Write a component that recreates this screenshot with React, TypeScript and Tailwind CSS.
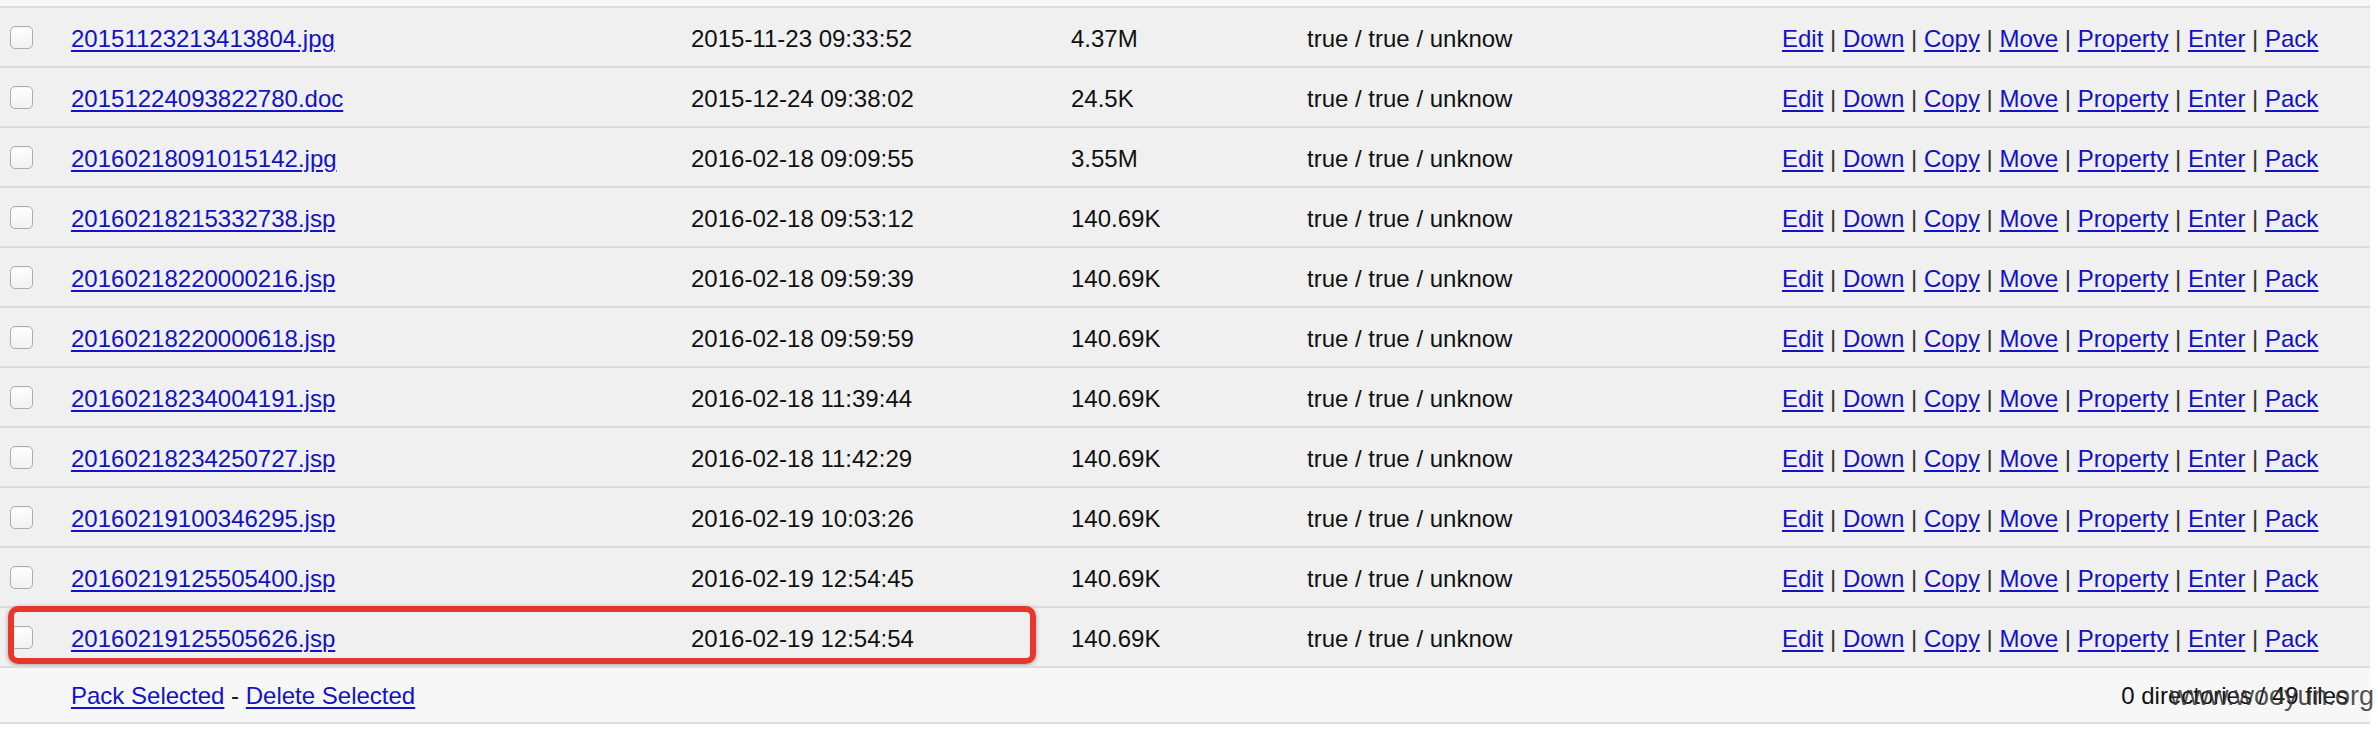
const files = [
  { name: "20151123213413804.jpg", time: "2015-11-23 09:33:52", size: "4.37M" },
  { name: "20151224093822780.doc", time: "2015-12-24 09:38:02", size: "24.5K" },
  { name: "20160218091015142.jpg", time: "2016-02-18 09:09:55", size: "3.55M" },
  { name: "20160218215332738.jsp", time: "2016-02-18 09:53:12", size: "140.69K" },
  { name: "20160218220000216.jsp", time: "2016-02-18 09:59:39", size: "140.69K" },
  { name: "20160218220000618.jsp", time: "2016-02-18 09:59:59", size: "140.69K" },
  { name: "20160218234004191.jsp", time: "2016-02-18 11:39:44", size: "140.69K" },
  { name: "20160218234250727.jsp", time: "2016-02-18 11:42:29", size: "140.69K" },
  { name: "20160219100346295.jsp", time: "2016-02-19 10:03:26", size: "140.69K" },
  { name: "20160219125505400.jsp", time: "2016-02-19 12:54:45", size: "140.69K" },
  { name: "20160219125505626.jsp", time: "2016-02-19 12:54:54", size: "140.69K" },
];

const actions = ["Edit", "Down", "Copy", "Move", "Property", "Enter", "Pack"];

const link = "text-[#1212c6] underline decoration-2 underline-offset-[3px]";

function Checkbox() {
  return (
    <span className="block h-[23px] w-[23px] rounded-[5px] border border-[#adadad] bg-gradient-to-b from-white to-[#f1f1f1] shadow-[inset_0_1px_1px_rgba(0,0,0,0.06)]" />
  );
}

export default function App() {
  return (
    <div className="w-[2378px] h-[730px] bg-white text-[24px] leading-none text-[#111] font-['Liberation_Sans',Arial,sans-serif]">
      <div className="w-[2370px]">
        <div className="h-[6px] bg-[#f6f6f6]" />

        {files.map((f, i) => (
          <div
            key={f.name}
            className="relative grid h-[60px] grid-cols-[71px_620px_380px_236px_475px_1fr] items-center border-t-2 border-[#dcdcdc] bg-[#f0f0f0] pt-[3px]"
          >
            <div className="pl-[10px] -mt-[2px]">
              <Checkbox />
            </div>
            <div>
              <a className={link}>{f.name}</a>
            </div>
            <div>{f.time}</div>
            <div>{f.size}</div>
            <div>true / true / unknow</div>
            <div className="whitespace-nowrap">
              {actions.map((a, j) => (
                <span key={a}>
                  {j > 0 && <span className="text-[#333]"> | </span>}
                  <a className={link}>{a}</a>
                </span>
              ))}
            </div>

            {i === files.length - 1 && (
              <div className="absolute left-[8px] top-[-2px] h-[58px] w-[1028px] rounded-[10px] border-[6px] border-[#e8362b] shadow-[0_1px_4px_rgba(0,0,0,0.35)]" />
            )}
          </div>
        ))}

        <div className="relative flex h-[58px] items-center justify-between border-y-2 border-[#dcdcdc] bg-[#f7f7f7] pl-[71px] pr-[22px] pt-[2px]">
          <div>
            <a className={link}>Pack Selected</a>
            <span> - </span>
            <a className={link}>Delete Selected</a>
          </div>
          <div>0 directories / 49 files</div>
          <span className="absolute left-[2170px] top-[15px] whitespace-nowrap text-[27px] text-[#333]/85">
            www.wooyun.org
          </span>
        </div>
      </div>
    </div>
  );
}
